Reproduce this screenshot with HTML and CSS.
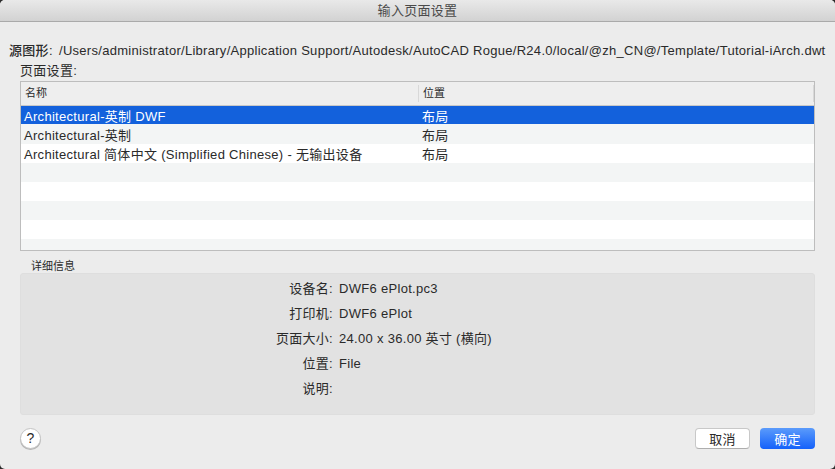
FILE: index.html
```html
<!DOCTYPE html>
<html lang="zh-CN">
<head>
<meta charset="utf-8">
<title>输入页面设置</title>
<link rel="stylesheet" href="styles.css">
</head>
<body>
<div class="dialog">
  <header class="titlebar">输入页面设置</header>
  <main class="content">
    <div class="source"><span class="source-label">源图形:</span><span class="source-path">/Users/administrator/Library/Application Support/Autodesk/AutoCAD Rogue/R24.0/local/@zh_CN@/Template/Tutorial-iArch.dwt</span></div>
    <div class="section-label">页面设置:</div>
    <div class="table">
      <div class="thead">
        <div class="th col-name">名称</div>
        <div class="th col-loc">位置</div>
        <div class="th col-end"></div>
      </div>
      <div class="row selected"><div class="col-name">Architectural-英制 DWF</div><div class="col-loc">布局</div></div>
      <div class="row alt tall"><div class="col-name">Architectural-英制</div><div class="col-loc">布局</div></div>
      <div class="row"><div class="col-name">Architectural 简体中文 (Simplified Chinese) - 无输出设备</div><div class="col-loc">布局</div></div>
      <div class="row alt"></div>
      <div class="row"></div>
      <div class="row alt"></div>
      <div class="row"></div>
      <div class="row alt"></div>
    </div>
    <div class="details-label">详细信息</div>
    <dl class="details">
      <dt>设备名:</dt><dd>DWF6 ePlot.pc3</dd>
      <dt>打印机:</dt><dd>DWF6 ePlot</dd>
      <dt>页面大小:</dt><dd>24.00 x 36.00 英寸 (横向)</dd>
      <dt>位置:</dt><dd>File</dd>
      <dt>说明:</dt><dd></dd>
    </dl>
    <footer class="footer">
      <button class="help" type="button">?</button>
      <div class="actions">
        <button class="btn" type="button">取消</button>
        <button class="btn primary" type="button">确定</button>
      </div>
    </footer>
  </main>
</div>
</body>
</html>
```
FILE: styles.css
```css
* { box-sizing: border-box; }
html, body { margin: 0; padding: 0; }
body {
  width: 835px;
  height: 469px;
  overflow: hidden;
  background: #2b2b2b;
  font-family: "Liberation Sans", "Noto Sans CJK SC", sans-serif;
  font-size: 13px;
  letter-spacing: 0.3px;
  color: #2a2a2a;
}
.dialog {
  width: 835px;
  height: 469px;
  background: #ececec;
  border-radius: 5px;
  overflow: hidden;
}
.titlebar {
  height: 22px;
  background: linear-gradient(#e9e9e9, #d2d2d2);
  border-bottom: 1px solid #aaaaaa;
  text-align: center;
  line-height: 22px;
  color: #4a4a4a;
}
.content { padding: 0 20px; }
.source {
  display: flex;
  margin: 21px 0 0 -11px;
  height: 16px;
  line-height: 16px;
  white-space: nowrap;
}
.source-label { flex: none; width: 50px; font-weight: 500; }
.source-path { letter-spacing: 0.285px; }
.section-label { height: 14px; line-height: 14px; margin-top: 5px; }
.table {
  margin-top: 3px;
  height: 170px;
  border: 1px solid #bdbdbd;
  background: #fff;
  overflow: hidden;
}
.thead {
  display: flex;
  height: 24px;
  background: #eeeeee;
  border-bottom: 1px solid #c8c8c8;
  font-size: 11px;
  letter-spacing: 0;
}
.col-name { width: 398px; padding-left: 3px; flex: none; white-space: nowrap; }
.col-loc { flex: 1; padding-left: 3px; }
.th.col-name { width: 397px; padding-left: 4px; line-height: 23px; }
.th.col-loc { border-left: 1px solid #d8d8d8; margin: 3px 0; line-height: 17px; padding-left: 4px; }
.th.col-end { flex: none; width: 1px; background: #d8d8d8; margin: 3px 0; }
.row {
  display: flex;
  height: 19px;
  line-height: 21px;
  background: #ffffff;
}
.row.alt { background: #f3f5f5; }
.row.tall { height: 20px; line-height: 23px; }
.row.selected { background: #1361dc; color: #fff; height: 18px; line-height: 21px; }
.details-label { margin: 9px 0 0 11px; height: 13px; line-height: 13px; font-size: 11px; letter-spacing: 0; }
.details {
  margin: 0;
  height: 142px;
  padding: 2px 0;
  background: #e2e2e2;
  border: 1px solid #dedede;
  border-radius: 3px;
  display: grid;
  grid-template-columns: 312px 1fr;
  grid-auto-rows: 25px;
  column-gap: 6px;
  line-height: 25px;
}
.details dt { text-align: right; }
.details dd { margin: 0; }
.footer {
  display: flex;
  justify-content: space-between;
  margin-top: 13px;
}
.help {
  width: 21px;
  height: 21px;
  padding: 0 0 2px;
  border: 1px solid #c4c4c4;
  border-radius: 50%;
  background: #fff;
  box-shadow: 0 1px 0 #b5b5b5;
  font: 14px "Liberation Sans", sans-serif;
  color: #2a2a2a;
}
.actions { display: flex; gap: 10px; }
.btn {
  width: 55px;
  height: 21px;
  padding: 0 0 1px;
  border: 1px solid #c8c8c8;
  border-bottom-color: #aeaeae;
  border-radius: 4px;
  background: #fff;
  font: 13px "Liberation Sans", "Noto Sans CJK SC", sans-serif;
  letter-spacing: 0.3px;
  color: #2a2a2a;
}
.btn.primary {
  border: none;
  background: linear-gradient(#5b9bfb, #1461fa);
  color: #fff;
}
```
